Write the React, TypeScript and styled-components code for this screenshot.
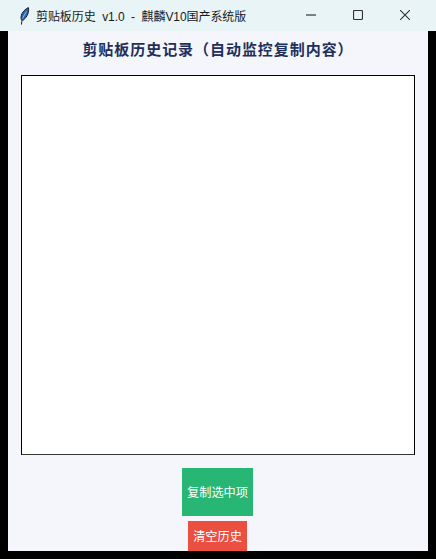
import { createGlobalStyle, styled } from 'styled-components';

const GlobalStyle = createGlobalStyle`
  html, body {
    margin: 0;
    padding: 0;
    background: #000;
  }

  body {
    font-family: "Liberation Sans", "Noto Sans CJK SC", sans-serif;
  }
`;

const App = () => {
  return (
    <Screen>
      <GlobalStyle />
      <TitleBar>
        <Feather viewBox="0 0 12 18">
          <path d="M2.4 17.6 C2.7 15 3 13 3.6 11" stroke="#15202e" strokeWidth="1" fill="none" />
          <path d="M2 11.5 C1.6 7.5 4.5 3 9.4 0.6 C10.2 5 8.6 9.5 4.4 13 C3.2 13.6 2.2 13 2 11.5 Z" fill="#2f62b0" stroke="#15202e" strokeWidth="1" />
          <path d="M3.4 11.5 L7.4 4.5" stroke="#a9c8ee" strokeWidth="0.8" fill="none" />
        </Feather>
        <WindowTitle>剪贴板历史  v1.0  -  麒麟V10国产系统版</WindowTitle>
        <Controls>
          <Control>
            <svg width="10" height="10" viewBox="0 0 10 10">
              <path d="M0 5H10" stroke="#333" strokeWidth="1.2" />
            </svg>
          </Control>
          <Control>
            <svg width="10" height="10" viewBox="0 0 10 10">
              <rect x="0.5" y="0.5" width="9" height="9" rx="1.2" fill="none" stroke="#333" strokeWidth="1.2" />
            </svg>
          </Control>
          <Control>
            <svg width="10" height="10" viewBox="0 0 10 10">
              <path d="M0 0L10 10M10 0L0 10" stroke="#333" strokeWidth="1.1" />
            </svg>
          </Control>
        </Controls>
      </TitleBar>
      <Client>
        <Heading>剪贴板历史记录（自动监控复制内容）</Heading>
        <HistoryList />
        <CopyButton>复制选中项</CopyButton>
        <ClearButton>清空历史</ClearButton>
      </Client>
    </Screen>
  );
};

export default App;

const Screen = styled.div`
  width: 436px;
  height: 559px;
  overflow: hidden;
  background: #000;
  display: flex;
  flex-direction: column;
  align-items: center;
`;

const TitleBar = styled.div`
  align-self: stretch;
  height: 31px;
  flex: none;
  background: #e9f4f7;
  display: flex;
  align-items: center;
  padding: 0 8px 0 19px;
`;

const Feather = styled.svg`
  width: 12px;
  height: 18px;
  margin-right: 5px;
  flex: none;
`;

const WindowTitle = styled.div`
  font-size: 12px;
  letter-spacing: -0.07px;
  color: #1a1a1a;
  white-space: pre;
  flex: 1;
`;

const Controls = styled.div`
  display: flex;
  height: 100%;
`;

const Control = styled.div`
  width: 47px;
  display: flex;
  align-items: center;
  justify-content: center;
  margin-top: -1px;
`;

const Client = styled.div`
  width: 420px;
  height: 520px;
  flex: none;
  background: #f4f6fb;
  display: flex;
  flex-direction: column;
  align-items: center;
  overflow: hidden;
`;

const Heading = styled.h1`
  margin: 7px 0 0;
  height: 37px;
  flex: none;
  font-size: 15px;
  line-height: 22px;
  font-weight: 700;
  letter-spacing: 0.95px;
  color: #1f2f5c;
  font-family: "Noto Sans CJK SC", sans-serif;
`;

const HistoryList = styled.div`
  width: 394px;
  height: 380px;
  box-sizing: border-box;
  flex: none;
  background: #fff;
  border: 1px solid #000;
  border-bottom-color: #333;
`;

const ActionButton = styled.button`
  border: 0;
  padding: 0;
  color: #fff;
  font-family: "Noto Sans CJK SC", sans-serif;
  font-size: 12.2px;
  flex: none;
  margin-right: 1px;
`;

const CopyButton = styled(ActionButton)`
  width: 71px;
  height: 48px;
  margin-top: 13px;
  background: #27b674;
`;

const ClearButton = styled(ActionButton)`
  width: 59px;
  height: 36px;
  margin-top: 5px;
  background: #ea4f3f;
  padding-bottom: 6px;
`;
